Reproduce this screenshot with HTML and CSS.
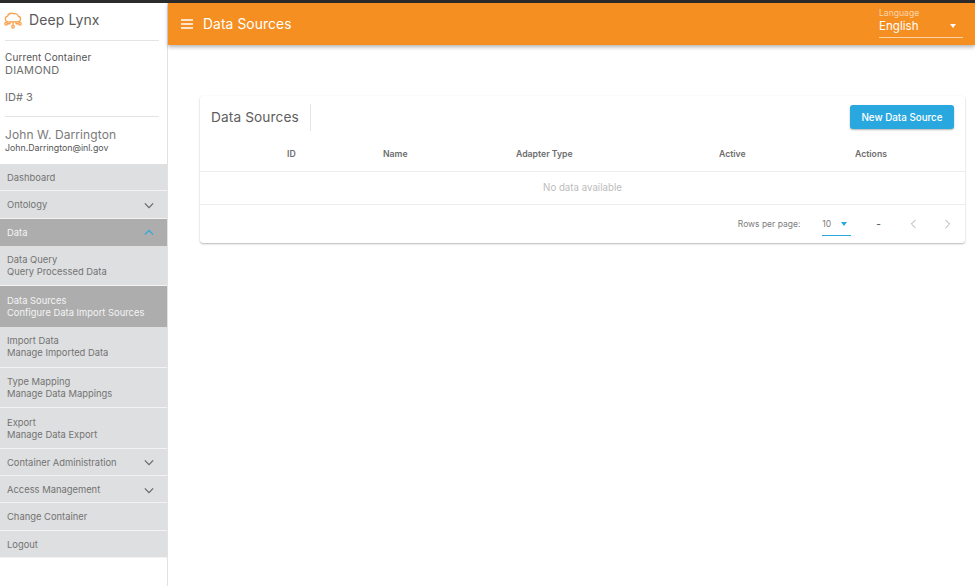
FILE: index.html
```html
<!DOCTYPE html>
<html lang="en">
<head>
<meta charset="utf-8">
<title>Data Sources</title>
<link rel="stylesheet" href="styles.css">
</head>
<body>
<div class="topline"></div>
<div class="app">
  <aside class="sidebar">
    <div class="brand">
      <svg class="logo" viewBox="0 0 24 24" width="18" height="18" fill="none" stroke="#f9a04a" stroke-width="1.7" stroke-linecap="round" stroke-linejoin="round">
        <path d="M7 14.5H5.5a3.9 3.9 0 0 1-.7-7.7A5 5 0 0 1 9.5 3a4.8 4.8 0 0 1 3.6.8A4.2 4.2 0 0 1 19 7a3.8 3.8 0 0 1-.3 7.5H7z"/>
        <path d="M12 14.5V19M8 14.5v2.5H4.5M16 14.5v2.5h3.5"/>
        <circle cx="12" cy="21" r="1.7"/><circle cx="2.8" cy="17" r="1.7"/><circle cx="21.2" cy="17" r="1.7"/>
      </svg>
      <span class="brand-name">Deep Lynx</span>
    </div>
    <div class="container-info">
      <div class="info-label">Current Container</div>
      <div class="info-value">DIAMOND</div>
      <div class="info-id">ID# 3</div>
    </div>
    <div class="user-info">
      <div class="user-name">John W. Darrington</div>
      <div class="user-mail">John.Darrington@inl.gov</div>
    </div>
    <nav class="nav">
      <a class="item">Dashboard</a>
      <a class="item">Ontology
        <svg class="chev" viewBox="0 0 12 8" width="10" height="7"><path d="M1 1.5l5 5 5-5"/></svg></a>
      <a class="item active">Data
        <svg class="chev up" viewBox="0 0 12 8" width="10" height="7"><path d="M1 6.5l5-5 5 5"/></svg></a>
      <a class="item tall">Data Query<br>Query Processed Data</a>
      <a class="item tall active">Data Sources<br>Configure Data Import Sources</a>
      <a class="item tall">Import Data<br>Manage Imported Data</a>
      <a class="item tall">Type Mapping<br>Manage Data Mappings</a>
      <a class="item tall">Export<br>Manage Data Export</a>
      <a class="item">Container Administration
        <svg class="chev" viewBox="0 0 12 8" width="10" height="7"><path d="M1 1.5l5 5 5-5"/></svg></a>
      <a class="item">Access Management
        <svg class="chev" viewBox="0 0 12 8" width="10" height="7"><path d="M1 1.5l5 5 5-5"/></svg></a>
      <a class="item">Change Container</a>
      <a class="item">Logout</a>
    </nav>
  </aside>
  <div class="main">
    <header class="appbar">
      <svg class="burger" viewBox="0 0 12 10" width="12" height="10"><path d="M0 1h12M0 5h12M0 9h12"/></svg>
      <h1 class="appbar-title">Data Sources</h1>
      <div class="lang">
        <div class="lang-label">Language</div>
        <div class="lang-row"><span>English</span><span class="lang-caret"></span></div>
      </div>
    </header>
    <section class="content">
      <div class="card">
        <div class="toolbar">
          <h2 class="toolbar-title">Data Sources</h2>
          <button class="new-btn">New Data Source</button>
        </div>
        <div class="thead">
          <span class="th">ID</span>
          <span class="th">Name</span>
          <span class="th">Adapter Type</span>
          <span class="th">Active</span>
          <span class="th">Actions</span>
        </div>
        <div class="empty">No data available</div>
        <div class="footer">
          <span class="rows-label">Rows per page:</span>
          <span class="rows-select"><span>10</span><span class="rows-caret"></span></span>
          <span class="range">-</span>
          <svg class="pager" viewBox="0 0 8 12" width="7" height="10"><path d="M6.5 1L1.5 6l5 5"/></svg>
          <svg class="pager" viewBox="0 0 8 12" width="7" height="10"><path d="M1.5 1l5 5-5 5"/></svg>
        </div>
      </div>
    </section>
  </div>
</div>
</body>
</html>
```
FILE: styles.css
```css
* { box-sizing: border-box; }
html, body { margin: 0; height: 100%; overflow: hidden; }
body { font-family: Inter, "Open Sans", "Liberation Sans", sans-serif; background: #fff; color: #555; }
.topline { height: 3px; background: #2b2b2b; }
.app { display: flex; height: 583px; }

.sidebar { width: 168px; flex: none; border-right: 1px solid #e2e2e2; padding-top: 1px; }
.brand { display: flex; align-items: center; gap: 7px; margin: 0 8px 0 5px; height: 37px; padding-bottom: 6px; border-bottom: 1px solid #e4e4e4; }
.logo { flex: none; margin-left: -1px; margin-top: 2px; }
.brand-name { font-size: 14px; color: #5a5a5a; letter-spacing: .1px; }
.container-info { margin: 0 8px 0 5px; height: 76px; padding-top: 10px; border-bottom: 1px solid #e4e4e4; }
.info-label { font-size: 10px; line-height: 12px; color: #555; letter-spacing: .1px; }
.info-value { font-size: 11px; line-height: 15px; color: #6e6e6e; letter-spacing: .2px; }
.info-id { font-size: 11px; line-height: 15px; color: #6e6e6e; margin-top: 12px; }
.user-info { padding: 10px 0 0 5px; height: 47px; }
.user-name { font-size: 12px; line-height: 15px; color: #7a7a7a; letter-spacing: .1px; }
.user-mail { font-size: 8.8px; line-height: 12px; color: #555; }

.nav { display: flex; flex-direction: column; }
.item { display: flex; align-items: center; justify-content: space-between; flex-wrap: nowrap; height: 27.3px; padding: 1.6px 13px 0 7px; font-size: 9.4px; line-height: 12px; color: #737373; background: #dedfe0; border-bottom: 1px solid #f3f3f3; }
.item.tall { display: block; height: 40.6px; padding-top: 8.4px; }
.item.active { background: #adadad; color: #f4f4f4; border-bottom-color: #adadad; }
.chev { fill: none; stroke: #666; stroke-width: 1.4; flex: none; }
.chev.up { stroke: #29a8e0; }

.main { flex: 1; min-width: 0; }
.appbar { display: flex; align-items: center; height: 42px; background: #f68f21; color: #fff; padding: 0 12px 0 13px; box-shadow: 0 2px 4px rgba(0,0,0,.3); position: relative; }
.burger { stroke: #fff; stroke-width: 1.3; flex: none; margin-top: -1px; }
.appbar-title { font-size: 13.8px; font-weight: 400; margin: 0 0 0 10px; flex: 1; letter-spacing: .1px; }
.lang { width: 84px; height: 30px; margin-top: -2px; border-bottom: 1px solid #fbd3a5; }
.lang-label { font-size: 8.6px; line-height: 10px; color: #fcd6ad; }
.lang-row { display: flex; align-items: center; justify-content: space-between; font-size: 11.6px; line-height: 16px; padding-right: 7px; }
.lang-caret { width: 0; height: 0; border: 3.5px solid transparent; border-top: 4px solid #fff; border-bottom: 0; }

.content { padding: 51px 10px 0 32px; }
.card { background: #fff; border-radius: 3px; box-shadow: 0 1px 2px rgba(0,0,0,.28), 0 0 1px rgba(0,0,0,.04); }
.toolbar { display: flex; align-items: center; justify-content: space-between; height: 41px; padding-right: 11px; padding-top: 1px; }
.toolbar-title { font-size: 13.7px; font-weight: 400; color: #5e5e5e; margin: 0; padding: 0 11px; height: 27px; line-height: 27px; border-right: 1px solid #e4e4e4; letter-spacing: .1px; }
.new-btn { font: 500 9.8px Inter, "Open Sans", sans-serif; color: #fff; background: #29a8e0; border: 0; border-radius: 3px; width: 104px; height: 24px; padding: 0; box-shadow: 0 1px 2px rgba(0,0,0,.3); }
.thead { display: grid; grid-template-columns: 96px 133px 203px 136px 1fr; align-items: center; height: 35px; padding: 0 0 0 87px; border-bottom: 1px solid #eee; }
.th { font-size: 8.7px; font-weight: 600; color: #6e6e6e; }
.empty { height: 33px; line-height: 32px; text-align: center; font-size: 9.7px; color: #bdbdbd; border-bottom: 1px solid #eee; }
.footer { display: flex; align-items: center; justify-content: flex-end; height: 38px; padding-right: 14px; }
.rows-label { font-size: 8.5px; color: #7d7d7d; margin-right: 22px; }
.rows-select { display: flex; align-items: center; justify-content: space-between; width: 29px; height: 22px; margin-top: 1px; font-size: 8.6px; color: #7d7d7d; border-bottom: 1px solid #29a8e0; padding-right: 4px; }
.rows-caret { width: 0; height: 0; border: 3.5px solid transparent; border-top: 4px solid #29a8e0; border-bottom: 0; }
.range { font-size: 10px; color: #666; margin: 0 29px 0 25px; font-weight: 600; }
.pager { fill: none; stroke: #aaa; stroke-width: 1.2; flex: none; }
.pager + .pager { margin-left: 27px; }
```
